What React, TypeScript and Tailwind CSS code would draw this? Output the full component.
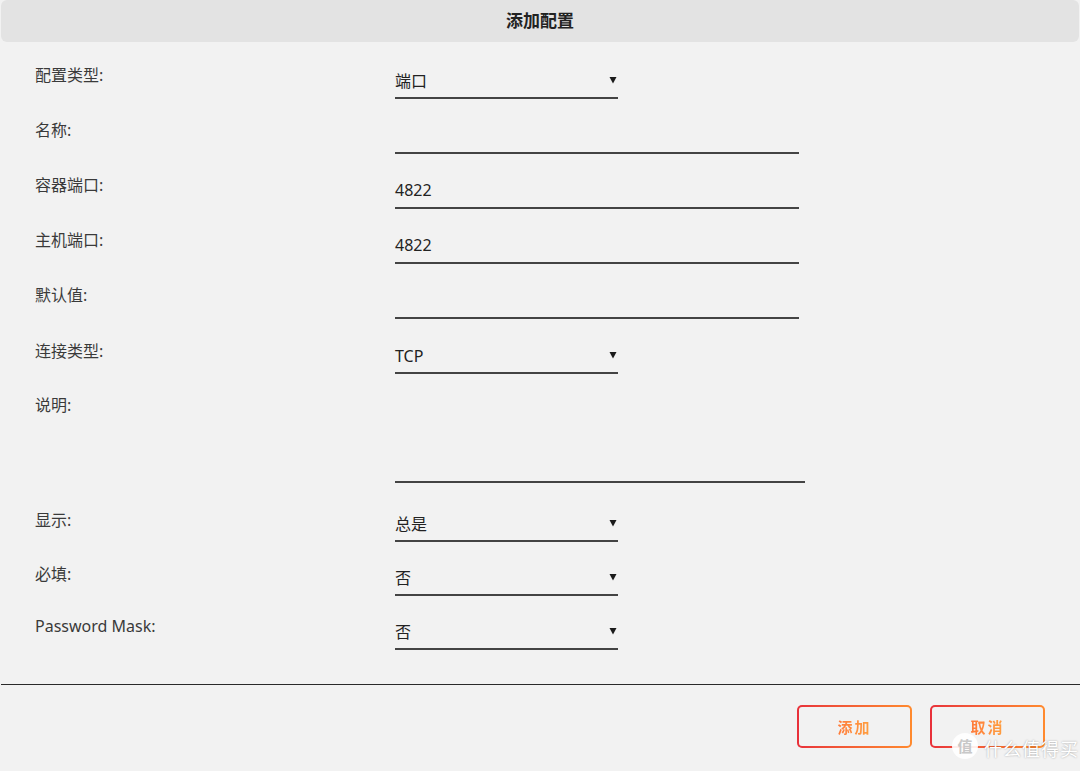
import { useState } from "react";

interface Row {
  label: string;
  value?: string;
  select?: boolean;
  wide?: number;
  h: number;
  labelTop: number;
  valueTop: number;
}

const rows: Row[] = [
  { label: "配置类型:", value: "端口", select: true, h: 55, labelTop: 20, valueTop: 26 },
  { label: "名称:", h: 55, labelTop: 20, valueTop: 26 },
  { label: "容器端口:", value: "4822", h: 55, labelTop: 20, valueTop: 25 },
  { label: "主机端口:", value: "4822", h: 55, labelTop: 20, valueTop: 25 },
  { label: "默认值:", h: 55, labelTop: 20, valueTop: 25 },
  { label: "连接类型:", value: "TCP", select: true, h: 55, labelTop: 21, valueTop: 26 },
  { label: "说明:", h: 109, labelTop: 20, valueTop: 26, wide: 410 },
  { label: "显示:", value: "总是", select: true, h: 59, labelTop: 26, valueTop: 30 },
  { label: "必填:", value: "否", select: true, h: 54, labelTop: 21, valueTop: 25 },
  { label: "Password Mask:", value: "否", select: true, h: 54, labelTop: 19, valueTop: 25 },
];

function Arrow() {
  return (
    <svg width="8" height="8" viewBox="0 0 8 8" className="shrink-0">
      <path d="M0.5 1 H7.5 L4 7.5 Z" fill="#1a1a1a" />
    </svg>
  );
}

function GradientButton({ text }: { text: string }) {
  return (
    <button className="w-[115px] h-[43px] rounded-[5px] p-[2px] bg-gradient-to-r from-[#e8303a] to-[#ff8a2e]">
      <span className="flex w-full h-full items-center justify-center rounded-[3px] bg-[#f2f2f2]">
        <span className="text-[15px] leading-[18px] font-bold tracking-[2px] bg-gradient-to-r from-[#ff7a3a] to-[#ffa040] bg-clip-text text-transparent">
          {text}
        </span>
      </span>
    </button>
  );
}

export default function App() {
  const [values] = useState(rows);

  return (
    <div
      className="relative w-[1080px] h-[771px] bg-[#f2f2f2] overflow-hidden text-[#333]"
      style={{ fontFamily: '"Noto Sans", "Noto Sans CJK SC", sans-serif' }}
    >
      <div className="mx-[1px] h-[42px] rounded-[6px] bg-[#e3e3e3] flex items-center justify-center">
        <span className="text-[17px] font-bold text-[#222]">添加配置</span>
      </div>

      <div className="pl-[35px] pt-[2px]">
        {values.map((r) => (
          <div key={r.label} className="flex" style={{ height: r.h }}>
            <div className="w-[360px] text-[16px] leading-[22px] text-[#3a3a3a]" style={{ paddingTop: r.labelTop }}>
              {r.label}
            </div>
            <div
              className="h-full border-b-2 border-[#444] flex items-start justify-between text-[16px] leading-[22px] text-[#222]"
              style={{ width: r.select ? 223 : r.wide ?? 404, paddingTop: r.valueTop }}
            >
              <span>{r.value}</span>
              {r.select && (
                <span className="pt-[6px] pr-[1px]">
                  <Arrow />
                </span>
              )}
            </div>
          </div>
        ))}
      </div>

      <div className="mt-[34px] ml-[1px] border-t border-[#2a2a2a]" />

      <div className="flex justify-end gap-[18px] pt-[20px] pr-[35px]">
        <GradientButton text="添加" />
        <GradientButton text="取消" />
      </div>

      {/* watermark */}
      <div className="absolute left-[952px] top-[733px] flex items-center gap-[6px] pointer-events-none">
        <span className="flex w-[26px] h-[26px] items-center justify-center rounded-full bg-white/90 text-[15px] leading-[15px] text-[#c8c8c8] font-bold">
          值
        </span>
        <span className="pt-[6px] text-[18px] leading-[18px] text-white tracking-[1px] [text-shadow:0_0_2px_rgba(0,0,0,0.35)]">
          什么值得买
        </span>
      </div>
    </div>
  );
}
